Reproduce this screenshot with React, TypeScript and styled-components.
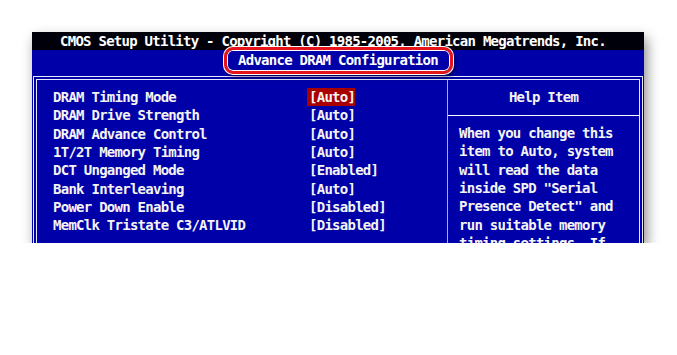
import styled, { createGlobalStyle } from "styled-components";

const GlobalStyle = createGlobalStyle`
  body {
    margin: 0;
    background: #ffffff;
  }
`;

const items = [
  { name: "DRAM Timing Mode", value: "[Auto]", active: true },
  { name: "DRAM Drive Strength", value: "[Auto]" },
  { name: "DRAM Advance Control", value: "[Auto]" },
  { name: "1T/2T Memory Timing", value: "[Auto]" },
  { name: "DCT Unganged Mode", value: "[Enabled]" },
  { name: "Bank Interleaving", value: "[Auto]" },
  { name: "Power Down Enable", value: "[Disabled]" },
  { name: "MemClk Tristate C3/ATLVID", value: "[Disabled]" },
];

const helpLines = [
  "When you change this",
  "item to Auto, system",
  "will read the data",
  'inside SPD "Serial',
  'Presence Detect" and',
  "run suitable memory",
  "timing settings. If",
];

export default function App() {
  return (
    <>
      <GlobalStyle />
      <Page>
        <Screen>
          <TopBar>CMOS Setup Utility - Copyright (C) 1985-2005, American Megatrends, Inc.</TopBar>
          <TitleBand>
            <TitleBox>Advance DRAM Configuration</TitleBox>
          </TitleBand>
          <Frame>
            <ItemsPane>
              {items.map((it) => (
                <Row key={it.name}>
                  <span>{it.name}</span>
                  <Value $active={it.active}>{it.value}</Value>
                </Row>
              ))}
            </ItemsPane>
            <HelpPane>
              <HelpHead>Help Item</HelpHead>
              <HelpText>
                {helpLines.map((l) => (
                  <div key={l}>{l}</div>
                ))}
              </HelpText>
            </HelpPane>
          </Frame>
        </Screen>
      </Page>
    </>
  );
}

const Page = styled.div`
  padding: 32px 0 0 32px;
`;

const Screen = styled.div`
  width: 612px;
  height: 211px;
  background: #0000a8;
  overflow: hidden;
  display: flex;
  flex-direction: column;
  box-shadow: 3px 6px 12px rgba(0, 0, 0, 0.45);
  font-family: "DejaVu Sans Mono", "Liberation Mono", monospace;
  font-size: 14px;
  font-weight: bold;
  letter-spacing: -0.74px;
  color: #f4f4f4;
  white-space: pre;
`;

const TopBar = styled.div`
  height: 18px;
  line-height: 18px;
  background: #00000a;
  color: #ffffff;
  padding-left: 28px;
  flex: none;
`;

const TitleBand = styled.div`
  height: 26px;
  flex: none;
  display: flex;
  justify-content: center;
  align-items: flex-start;
`;

const TitleBox = styled.div`
  margin-top: -3px;
  width: 229px;
  height: 27px;
  box-sizing: border-box;
  border: 3px solid #e4141a;
  border-radius: 9px;
  box-shadow: inset 0 0 0 1px #ffffff, 0 0 0 1px #ffffff,
    2px 3px 4px rgba(0, 0, 0, 0.5);
  background: #0000a8;
  color: #ffffff;
  text-align: center;
  line-height: 20px;
  position: relative;
`;

const Frame = styled.div`
  flex: 1;
  margin: 0 1px;
  border: 4px double #e8e8ff;
  border-bottom: none;
  display: flex;
`;

const ItemsPane = styled.div`
  width: 411px;
  border-right: 1px solid #a8a8ff;
  padding: 8px 0 0 16px;
  box-sizing: border-box;
`;

const Row = styled.div`
  display: grid;
  grid-template-columns: 256px auto;
  line-height: 18.33px;
`;

const Value = styled.span<{ $active?: boolean }>`
  justify-self: start;
  margin-left: -2px;
  padding: 0 0 0 2px;
  background: ${(p) => (p.$active ? "#a80000" : "transparent")};
`;

const HelpPane = styled.div`
  flex: 1;
  display: flex;
  flex-direction: column;
`;

const HelpHead = styled.div`
  height: 35px;
  line-height: 35px;
  text-align: center;
  border-bottom: 1px solid #ffffff;
  flex: none;
`;

const HelpText = styled.div`
  padding: 8px 0 0 11px;
  line-height: 18.33px;
`;
